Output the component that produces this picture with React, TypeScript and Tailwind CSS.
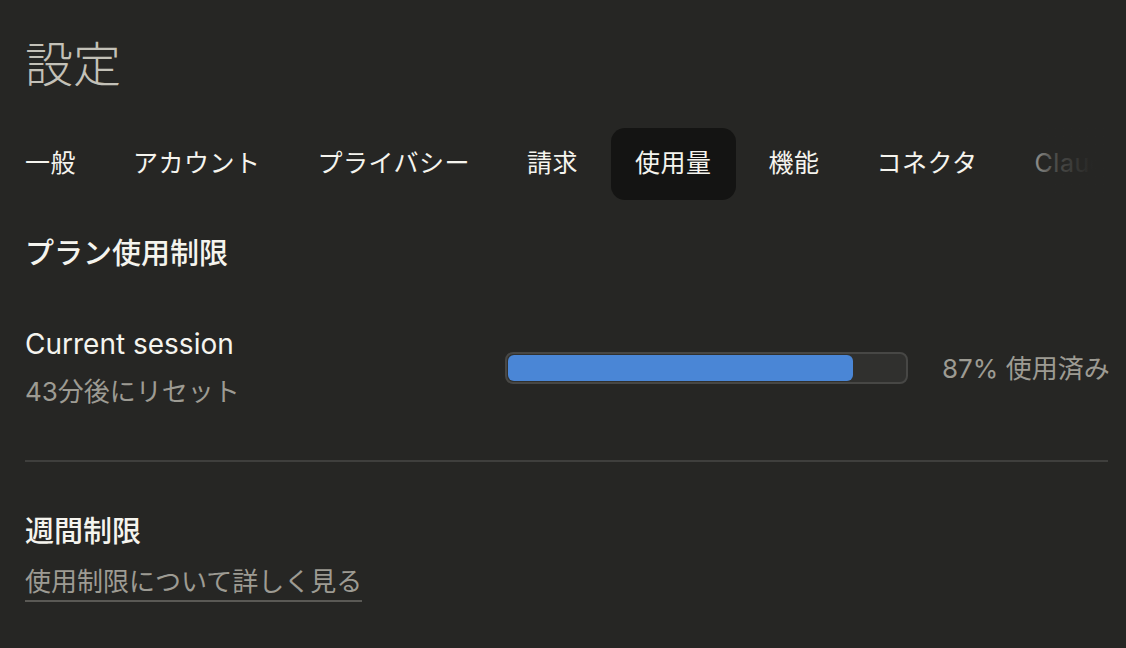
import React from 'react';

const tabs = ['一般', 'アカウント', 'プライバシー', '請求', '使用量', '機能', 'コネクタ', 'Claude Code'];

const App: React.FC = () => {
  const active = '使用量';
  const used = 87;

  return (
    <div className="min-h-[648px] w-full bg-[#262624] text-[#f5f4ee] font-['Inter','Noto_Sans_CJK_JP',sans-serif] pl-[25px] pr-[18px] overflow-hidden">
      <h1 className="pt-[34px] text-[48px] leading-[64px] font-light text-[#c3c1b8] font-['Liberation_Serif','Noto_Sans_CJK_JP',serif]">
        設定
      </h1>

      {/* タブ */}
      <div className="relative mt-[30px] -ml-[24px] overflow-hidden">
        <div className="flex items-center gap-[9px] whitespace-nowrap">
          {tabs.map(t => (
            <div
              key={t}
              className={
                t === active
                  ? 'h-[72px] px-[24px] flex items-center rounded-[14px] bg-[#141413] text-[25px] tracking-[0.5px] text-[#f5f4ee]'
                  : 'h-[72px] px-[24px] flex items-center text-[25px] tracking-[0.5px] text-[#f5f4ee]'
              }
            >
              {t}
            </div>
          ))}
        </div>
        <div className="pointer-events-none absolute right-0 top-0 h-full w-[100px] bg-gradient-to-r from-[#262624]/0 via-[#262624]/80 via-45% to-[#262624] to-85%" />
      </div>

      {/* プラン使用制限 */}
      <h2 className="mt-[34px] text-[29px] leading-[40px] font-medium">プラン使用制限</h2>

      <div className="mt-[46px] flex items-center">
        <div className="w-[480px] shrink-0">
          <div className="text-[28px] leading-[48px] text-[#f5f4ee]">Current session</div>
          <div className="text-[26px] leading-[48px] text-[#9d9b93]">43分後にリセット</div>
        </div>
        <div className="flex-1 flex items-center gap-[34px]">
          <div className="h-[32px] w-[403px] rounded-[8px] border-2 border-[#474745] bg-[#30302e] p-px">
            <div className="h-full rounded-[6px] bg-[#4a86d6]" style={{ width: `${used}%` }} />
          </div>
          <div className="text-[26px] text-[#9d9b93] whitespace-nowrap">{used}% 使用済み</div>
        </div>
      </div>

      <div className="mt-[44px] h-[2px] bg-[#3f3f3d]" />

      {/* 週間制限 */}
      <h2 className="mt-[50px] text-[29px] leading-[40px] font-medium">週間制限</h2>
      <a className="mt-[12px] inline-block text-[26px] leading-[36px] text-[#9d9b93] border-b-2 border-[#5a5955]">
        使用制限について詳しく見る
      </a>
    </div>
  );
};

export default App;
